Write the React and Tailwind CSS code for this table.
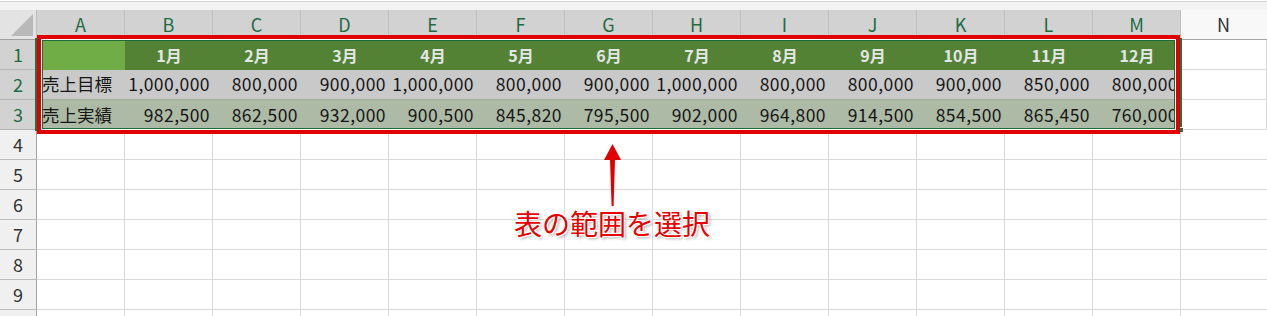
const LETTERS = ['A', 'B', 'C', 'D', 'E', 'F', 'G', 'H', 'I', 'J', 'K', 'L', 'M']
const MONTHS = ['1月', '2月', '3月', '4月', '5月', '6月', '7月', '8月', '9月', '10月', '11月', '12月']
const TARGET = ['1,000,000', '800,000', '900,000', '1,000,000', '800,000', '900,000', '1,000,000', '800,000', '800,000', '900,000', '850,000', '800,000']
const ACTUAL = ['982,500', '862,500', '932,000', '900,500', '845,820', '795,500', '902,000', '964,800', '914,500', '854,500', '865,450', '760,000']

function RowHead({ n, selected }) {
  return (
    <div
      className={[
        'flex items-center justify-center border-r border-b text-[18px]',
        selected
          ? 'bg-[#d2d2d2] text-[#1e6b41] border-r-[#9c9c9c] border-b-[#b4b4b4]'
          : 'bg-[#f0f0f0] text-[#333] border-r-[#a3a3a3] border-b-[#bdbdbd]',
      ].join(' ')}
    >
      {n}
    </div>
  )
}

function EmptyCell() {
  return <div className="border-r border-b border-[#dadada] bg-white" />
}

export default function App() {
  const empty = [4, 5, 6, 7, 8, 9]

  return (
    <div className="relative w-[1267px] h-[316px] overflow-hidden bg-white font-['Noto_Sans_CJK_JP',sans-serif]">
      {/* ribbon edge */}
      <div className="h-px bg-white" />
      <div className="h-px bg-[#d6d6d6]" />
      <div className="h-[8px] bg-[#f3f3f3]" />

      <div className="grid grid-cols-[37px_repeat(13,88px)_1fr] auto-rows-[30px]">
        {/* column headers */}
        <div className="relative bg-[#e3e3e3] border-r border-b border-r-[#bdbdbd] border-b-[#9e9e9e]">
          <svg className="absolute right-[3px] bottom-[3px]" width="22" height="22" viewBox="0 0 22 22">
            <polygon points="22,0 22,22 0,22" fill="#b9b9b9" />
          </svg>
        </div>
        {LETTERS.map((l) => (
          <div
            key={l}
            className="flex items-center justify-center bg-[#d2d2d2] text-[#1e6b41] text-[18px] border-r border-b border-r-[#bdbdbd] border-b-[#9a9a9a]"
          >
            {l}
          </div>
        ))}
        <div className="flex items-center justify-center bg-[#f8f8f8] text-[#333] text-[18px] border-b border-[#a8a8a8] pr-[1px]">
          N
        </div>

        {/* row 1 */}
        <RowHead n={1} selected />
        <div className="bg-[#70ad47]" />
        {MONTHS.map((m) => (
          <div key={m} className="flex items-center justify-center bg-[#548235] text-[#e3e6e6] text-[16px] font-bold">
            {m}
          </div>
        ))}
        <EmptyCell />

        {/* row 2 */}
        <RowHead n={2} selected />
        <div className="flex items-center pl-[5px] bg-[#c9c9c9] text-[#161616] text-[17.5px] border-b border-[#a2ae9c]">
          売上目標
        </div>
        {TARGET.map((v, i) => (
          <div key={i} className="flex items-center justify-end pr-[3px] bg-[#c9c9c9] text-[#161616] text-[17.5px] tracking-[0.45px] border-b border-[#a2ae9c]">
            {v}
          </div>
        ))}
        <EmptyCell />

        {/* row 3 */}
        <RowHead n={3} selected />
        <div className="flex items-center pl-[5px] bg-[#adbaa6] text-[#161616] text-[17.5px]">
          売上実績
        </div>
        {ACTUAL.map((v, i) => (
          <div key={i} className="flex items-center justify-end pr-[3px] bg-[#adbaa6] text-[#161616] text-[17.5px] tracking-[0.45px]">
            {v}
          </div>
        ))}
        <EmptyCell />

        {/* empty rows */}
        {empty.map((n) => (
          <div key={n} className="contents">
            <RowHead n={n} />
            {LETTERS.map((l) => (
              <EmptyCell key={l} />
            ))}
            <div className="border-b border-[#dadada] bg-white" />
          </div>
        ))}

        {/* row 10, only its top edge is in view */}
        <div className="bg-[#f0f0f0] border-r border-[#a3a3a3]" />
        {LETTERS.map((l) => (
          <div key={l} className="border-r border-[#dadada] bg-white" />
        ))}
        <div className="bg-white" />
      </div>

      {/* Excel selection outline */}
      <div className="absolute left-[35px] top-[38px] w-[2px] h-[93px] bg-[#1e7145]" />
      <div className="absolute left-[1180px] top-[38px] w-[2px] h-[90px] bg-[#1e7145]" />
      <div className="absolute left-[1179px] top-[127px] w-[5px] h-[6px] bg-[#1e7145] border border-white" />

      {/* red annotation frame */}
      <div className="absolute left-[37px] top-[35px] w-[1143px] h-[99px] border-4 border-[#e00000] shadow-[inset_0_0_0_1px_#ffffff,inset_0_0_0_2px_#1e6b3a]" />

      {/* arrow */}
      <svg className="absolute left-[600px] top-[140px]" width="26" height="70" viewBox="0 0 26 70">
        <polygon points="12.5,4 21,20 4,20" fill="#e00000" />
        <polygon points="10,19 15,19 13.6,66 11.6,66" fill="#e00000" />
      </svg>

      {/* annotation label */}
      <div className="absolute left-[612px] top-[205px] -translate-x-1/2 whitespace-nowrap text-[28px] leading-[36px] text-[#e60000] [text-shadow:0_0_2px_#fff,1px_1px_0_#fff,-1px_-1px_0_#fff,1px_-1px_0_#fff,-1px_1px_0_#fff,2px_2px_3px_rgba(0,0,0,0.35)]">
        表の範囲を選択
      </div>
    </div>
  )
}
